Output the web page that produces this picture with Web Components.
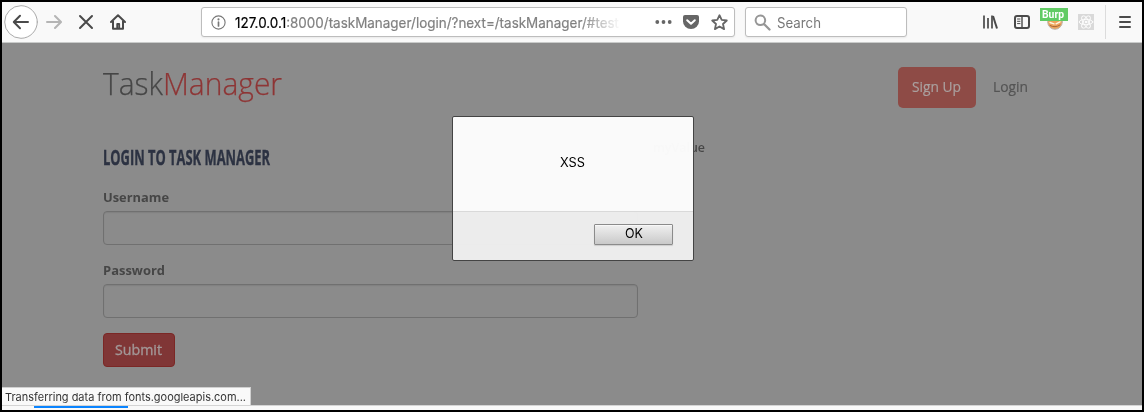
<!DOCTYPE html>
<html lang="en"><head><meta charset="utf-8"><title>Task Manager</title>
<style>html,body{margin:0;height:412px;overflow:hidden;background:#000}</style></head>
<body><browser-window></browser-window>
<script>
const define=(name,html,init)=>customElements.define(name,class extends HTMLElement{
  constructor(){super();this.attachShadow({mode:'open'}).innerHTML=html;}
  connectedCallback(){if(init)init.call(this);}
});

/* Text run scaled horizontally to the width given in its w attribute. */
define('fit-text','<style>:host{display:block;white-space:nowrap}span{display:inline-block;transform-origin:0 50%}</style><span><slot></slot></span>',function(){
  const s=this.shadowRoot.querySelector('span'),w=+this.getAttribute('w');
  this.style.width=w+'px';
  const fit=()=>{const n=s.offsetWidth;if(n){s.style.transform='none';s.style.transform=`scaleX(${w/s.getBoundingClientRect().width})`;}};
  requestAnimationFrame(fit);
});

define('tool-bar',`<style>
:host{display:flex;align-items:center;height:40px;background:#f9f9f9;border-bottom:1px solid #c9cbca;font-family:Inter,"Liberation Sans",sans-serif}
svg{display:block;flex:none;fill:none;stroke:#4a4a4a;stroke-width:2;stroke-linecap:round;stroke-linejoin:round}
.back{margin-left:2px}.fwd{margin-left:8px;stroke:#b5b5b5}.g16{margin-left:16px}
.box{box-sizing:border-box;height:30px;background:#fff;border:1px solid #bdbdbd;border-radius:3px;box-shadow:0 1px 2px #0001;display:flex;align-items:center;flex:none;font-size:14px;line-height:20px;color:#808080}
.url{width:534px;margin-left:75px;padding-left:9px}
.addr{width:384px;margin-left:9px;padding-top:2px;-webkit-text-stroke:.2px;-webkit-mask-image:linear-gradient(90deg,#000 345px,transparent 386px);mask-image:linear-gradient(90deg,#000 345px,transparent 386px)}
b{font-weight:400;color:#000}
.search{width:162px;margin-left:10px;padding-left:8px}
.search fit-text{margin-left:6px;padding-top:2px;color:#777}
.sep{width:1px;height:34px;background:#dcdcdc;margin-left:11px;flex:none}
.burp{position:relative;width:28px;height:24px;margin-left:10px;flex:none}
.badge{position:absolute;left:0;top:-2px;width:28px;height:13px;background:#61cb64;color:#fff;font:700 10px/13px Roboto,sans-serif}
.badge fit-text{margin-left:2px}
.burp svg{position:absolute;left:6px;top:3px}
</style>
<svg class="back" width="34" height="34" viewBox="0 0 34 34"><circle cx="17" cy="17" r="16.3" fill="#fff" stroke="#aaa" stroke-width="1"/><path d="M24 17H10M16 10.8L9.8 17l6.2 6.2"/></svg>
<svg class="fwd" width="16" height="16"><path d="M1 8h13M9 2l6 6-6 6"/></svg>
<svg class="g16" width="16" height="16"><path d="M2 2l12 12M14 2L2 14"/></svg>
<svg class="g16" width="16" height="16"><path d="M1 8L8 1.3 15 8M3 7v7.7h10V7"/><path d="M7.2 14v-4h2v4" stroke-width="1.8"/></svg>
<div class="box url"><svg width="15" height="15" style="stroke:#777;stroke-width:1.1"><circle cx="7.5" cy="7.5" r="6.6"/><path d="M7.5 7v4" stroke-width="1.7"/><circle cx="7.5" cy="4.4" r=".5"/></svg>
<div class="addr"><fit-text w="384"><b>127.0.0.1</b>:8000/taskManager/login/?next=/taskManager/#test</fit-text></div>
<svg width="18" height="6" style="fill:#666;stroke:none;margin-left:36px"><circle cx="2.3" cy="3" r="1.9"/><circle cx="8.5" cy="3" r="1.9"/><circle cx="14.7" cy="3" r="1.9"/></svg>
<svg width="16" height="16" style="stroke:none;margin-left:10px"><path fill="#666" d="M2 1h12q2 0 2 2v4.5a8 7.5 0 0 1-16 0V3q0-2 2-2z"/><path d="M4.2 6.2L8 9.8l3.8-3.6" stroke="#fff" stroke-width="2"/></svg>
<svg width="17" height="17" style="stroke:#666;stroke-width:1.8;margin-left:12px"><path d="M8.5 1.2l2.2 4.7 5.1.6-3.8 3.5 1.1 5.1-4.6-2.6-4.6 2.6L5 10 1.2 6.5l5.1-.6z"/></svg></div>
<div class="box search"><svg width="17" height="17" style="stroke:#969696"><circle cx="6.4" cy="6.3" r="4.8"/><path d="M10 10l5.5 5.5" stroke-width="2.3"/></svg><fit-text w="44">Search</fit-text></div>
<svg width="16" height="16" style="margin-left:75px;stroke-linecap:butt"><path d="M2 1.5v13M6 4v10.5M10 1.5v13" stroke-width="1.7"/><path d="M11 2l4 12.5" stroke-width="2"/></svg>
<svg class="g16" width="16" height="16"><rect x="1" y="2" width="14" height="12" rx="2"/><path d="M8 2v12" stroke-width="1.4"/><path d="M3.5 5H6M3.5 7.3H6M3.5 9.6H6" stroke-width="1"/></svg>
<div class="burp"><svg width="18" height="18" stroke="none"><circle cx="9" cy="9" r="7.3" fill="#eda35a" stroke="#bdb5ad" stroke-width="1"/><path d="M4 12.5q5 2.8 10-.5" stroke="#a8683a" stroke-width="1"/><path d="M4 9.5l4 1.3M10 10.8l4-2" stroke="#fff5df" stroke-width="1.4"/></svg><div class="badge"><fit-text w="22">Burp</fit-text></div></div>
<svg width="16" height="16" style="margin-left:10px;stroke:#fff;stroke-width:.9"><path d="M0 0h16v16H0z" fill="#d9d9d9" stroke="none"/><g transform="translate(8 8)"><ellipse rx="6.8" ry="2.7"/><ellipse rx="6.8" ry="2.7" transform="rotate(60)"/><ellipse rx="6.8" ry="2.7" transform="rotate(120)"/><circle r=".9" fill="#fff"/></g></svg>
<i class="sep"></i>
<svg width="12" height="14" style="margin-left:13px"><path d="M1 2h10M1 7h10M1 12h10"/></svg>`);

define('site-header',`<style>
:host{display:flex;height:98px;font-family:"Open Sans",sans-serif}
.brand{display:flex;padding-top:20px;font-size:31px;line-height:40px;font-weight:300;color:#464646;width:795px;-webkit-text-stroke:.25px}
.m{color:#8e3535}
.up{box-sizing:border-box;width:78px;height:41px;margin-top:24px;padding-left:14px;border-radius:5px;background:#8e4b46;color:#aaa09f;font-size:15px;line-height:39px;-webkit-text-stroke:.2px}
.in{margin:24px 0 0 17px;font-size:15px;line-height:39px;color:#545454;-webkit-text-stroke:.2px}
</style><div class="brand"><fit-text w="60">Task</fit-text><fit-text class="m" w="119">Manager</fit-text></div>
<div class="up"><fit-text w="49">Sign Up</fit-text></div><fit-text class="in" w="35">Login</fit-text>`);

define('form-field',`<style>
:host{display:block;height:73px;font:700 13px/18px "Open Sans",sans-serif;color:#464646}
div{box-sizing:border-box;height:34px;margin-top:5px;border:1px solid #707070;border-radius:4px;box-shadow:inset 0 1px 1px #00000014}
</style><slot></slot><div></div>`);

define('login-page',`<style>
:host{display:block;height:362px;padding-left:101px;background:#8b8b8b;box-sizing:border-box;font-family:"Open Sans",sans-serif}
main{display:grid;grid-template-columns:535px auto;column-gap:15px}
h2{margin:0 0 17px;font-size:22px;line-height:30px;font-weight:700;color:#2c3242;-webkit-text-stroke:.4px}
.btn{box-sizing:border-box;width:72px;height:34px;margin-top:-1px;padding-left:11px;border:1px solid #7b2725;border-radius:4px;background:#803636;color:#a29797;font-size:15px;line-height:31px;-webkit-text-stroke:.35px}
.val{font-size:13px;line-height:18px;font-weight:600;color:#464646;margin-top:-3px}
</style><site-header></site-header>
<main><section><h2><fit-text w="167">LOGIN TO TASK MANAGER</fit-text></h2>
<form-field><fit-text w="66">Username</fit-text></form-field><form-field><fit-text w="62">Password</fit-text></form-field>
<div class="btn"><fit-text w="47">Submit</fit-text></div></section><fit-text class="val" w="52">myValue</fit-text></main>`);

define('alert-dialog',`<style>
:host{position:absolute;left:452px;top:116px;width:242px;height:145px;box-sizing:border-box;border:1px solid #444;border-radius:2px;background:#fcfcfcfa;display:flex;flex-direction:column;font:13px/18px Inter,"Liberation Sans",sans-serif;color:#000}
.msg{height:94px;display:flex;justify-content:center;align-items:center;box-sizing:border-box;padding:0 1px 5px 0}
footer{flex:1;box-sizing:border-box;border-top:1px solid #d9d9d9;background:#0000000e;display:flex;justify-content:flex-end;padding:12px 20px 0 0}
.ok{box-sizing:border-box;width:79px;height:21px;border:1px solid #8b8b8b;border-radius:1px;background:linear-gradient(#f0f0f0,#c9c9c9);box-shadow:inset 0 1px #fff8,0 1px 1px #0002;display:flex;justify-content:center;line-height:17px}
</style><div class="msg"><fit-text w="25">XSS</fit-text></div><footer><div class="ok"><fit-text w="18">OK</fit-text></div></footer>`);

define('status-tip',`<style>
:host{position:absolute;left:2px;top:387px;width:249px;height:18px;box-sizing:border-box;padding-left:3px;border-top:1px solid #d0d0d0;border-right:1px solid #d0d0d0;background:#f9f9f9;font:11px/19px Inter,"Liberation Sans",sans-serif;color:#333}
</style><fit-text w="241">Transferring data from fonts.googleapis.com...</fit-text>`);

define('browser-window',`<style>
:host{display:block;position:relative;box-sizing:border-box;width:1144px;height:412px;border:2px solid #000;background:#f9f9f9}
.over{position:absolute;left:-2px;top:-2px}
.strip{height:5px;box-sizing:border-box;border-top:1px solid #d4d4d4;padding-left:32px}
.tab{width:94px;height:2px;background:#0a84ff}
</style><tool-bar></tool-bar><login-page></login-page><div class="strip"><div class="tab"></div></div>
<div class="over"><alert-dialog></alert-dialog><status-tip></status-tip></div>`);
</script></body></html>
